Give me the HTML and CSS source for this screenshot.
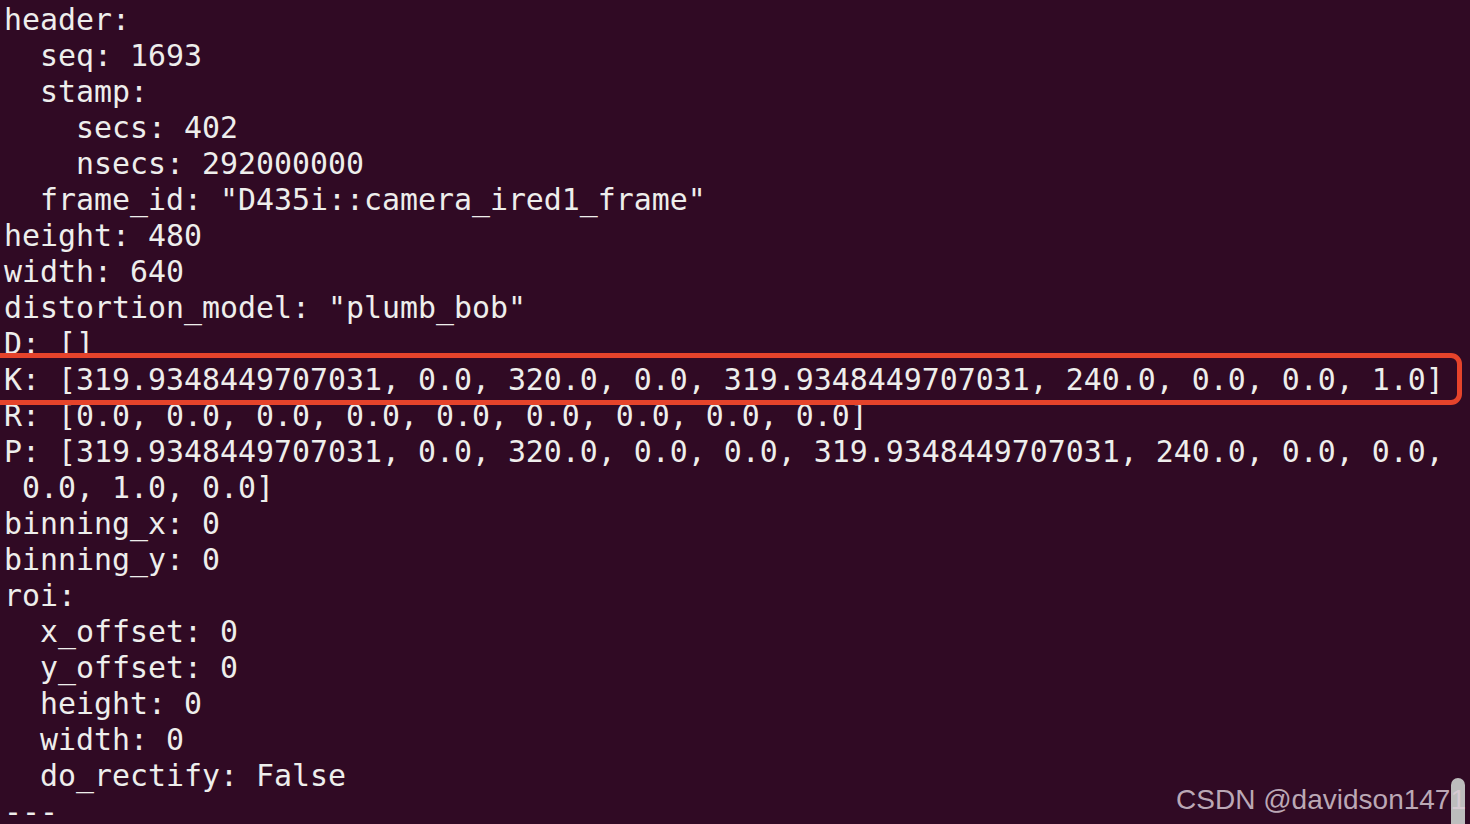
FILE: index.html
```html
<!DOCTYPE html>
<html lang="en">
<head>
<meta charset="utf-8">
<title>Terminal</title>
<link rel="stylesheet" href="styles.css">
</head>
<body>
<div class="screen">
<div class="term"><div class="line">header:</div><div class="line">  seq: 1693</div><div class="line">  stamp:</div><div class="line">    secs: 402</div><div class="line">    nsecs: 292000000</div><div class="line">  frame_id: "D435i::camera_ired1_frame"</div><div class="line">height: 480</div><div class="line">width: 640</div><div class="line">distortion_model: "plumb_bob"</div><div class="line">D: []</div><div class="line marked">K: [319.9348449707031, 0.0, 320.0, 0.0, 319.9348449707031, 240.0, 0.0, 0.0, 1.0]</div><div class="line">R: [0.0, 0.0, 0.0, 0.0, 0.0, 0.0, 0.0, 0.0, 0.0]</div><div class="line">P: [319.9348449707031, 0.0, 320.0, 0.0, 0.0, 319.9348449707031, 240.0, 0.0, 0.0,</div><div class="line"> 0.0, 1.0, 0.0]</div><div class="line">binning_x: 0</div><div class="line">binning_y: 0</div><div class="line">roi:</div><div class="line">  x_offset: 0</div><div class="line">  y_offset: 0</div><div class="line">  height: 0</div><div class="line">  width: 0</div><div class="line">  do_rectify: False</div><div class="line">---</div></div>
<div class="scrollbar"></div>
<div class="watermark">CSDN @davidson1471</div>
</div>
</body>
</html>
```

FILE: styles.css
```css
html, body {
  margin: 0;
  padding: 0;
  background: #300a24;
  overflow: hidden;
}

.screen {
  position: relative;
  width: 1470px;
  height: 824px;
  overflow: hidden;
  background: #300a24;
}

.term {
  padding: 2px 0 0 4px;
  font-family: "DejaVu Sans Mono", "Liberation Mono", monospace;
  font-size: 29.9px;
  line-height: 36px;
  color: #eeeeec;
  white-space: pre;
}

.line {
  height: 36px;
}

.marked {
  position: relative;
}

.marked::after {
  content: "";
  position: absolute;
  left: -30px;
  right: 8px;
  top: -9px;
  bottom: -7px;
  border: 5px solid #e5432b;
  border-radius: 11px;
  pointer-events: none;
}

.scrollbar {
  position: absolute;
  left: 1451px;
  top: 778px;
  width: 14px;
  height: 60px;
  border-radius: 7px 7px 0 0;
  background: #bdbdbd;
}

.watermark {
  position: absolute;
  right: 4px;
  bottom: 8px;
  font-family: "Liberation Sans", Arial, sans-serif;
  font-size: 28px;
  line-height: 32px;
  color: rgba(220, 205, 215, 0.82);
}
```
